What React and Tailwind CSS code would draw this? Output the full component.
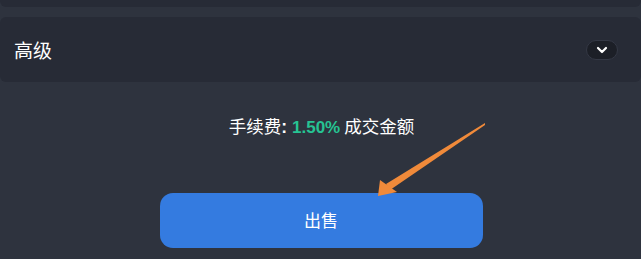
import React from "react";

export default function App() {
  return (
    <div
      className="relative w-[641px] h-[259px] overflow-hidden bg-[#2e333e]"
      style={{ fontFamily: '"Noto Sans CJK SC", "Noto Sans", "Liberation Sans", sans-serif' }}
    >
      <div className="h-[7px] bg-[#272b36] rounded-b-md" />
      <div className="mt-[10px] h-[65px] bg-[#272b36] rounded-md flex items-center justify-between pl-[14px] pr-[23px]">
        <span className="text-[19px] text-white leading-none">高级</span>
        <div className="w-[32px] h-[20px] rounded-full bg-[#1c1f27] border border-[#343845] flex items-center justify-center">
          <svg width="12" height="8" viewBox="0 0 12 8" fill="none">
            <path d="M2 2 L6 6 L10 2" stroke="white" strokeWidth="2.2" strokeLinecap="round" strokeLinejoin="round" />
          </svg>
        </div>
      </div>
      <div className="mt-[35px] flex justify-center text-[17.5px] text-white leading-none">
        <span className="ml-[2px]">
          手续费<span className="font-bold" style={{ fontFamily: '"Liberation Sans", sans-serif' }}>: </span>
          <span className="font-bold text-[#26c493] text-[17px]" style={{ fontFamily: '"Liberation Sans", sans-serif' }}>1.50%</span> 成交金额
        </span>
      </div>
      <div className="mt-[56px] flex justify-center">
        <button className="w-[323px] h-[55px] ml-[1px] rounded-[13px] bg-[#347be0] text-white text-[17px] flex items-center justify-center">
          出售
        </button>
      </div>
      <svg className="absolute left-0 top-0 pointer-events-none" width="641" height="259">
        <polygon points="485,123 485,125 390,190 386,184" fill="#f08a3a" />
        <polygon points="378,196 380,180 397,192" fill="#f08a3a" />
      </svg>
    </div>
  );
}
